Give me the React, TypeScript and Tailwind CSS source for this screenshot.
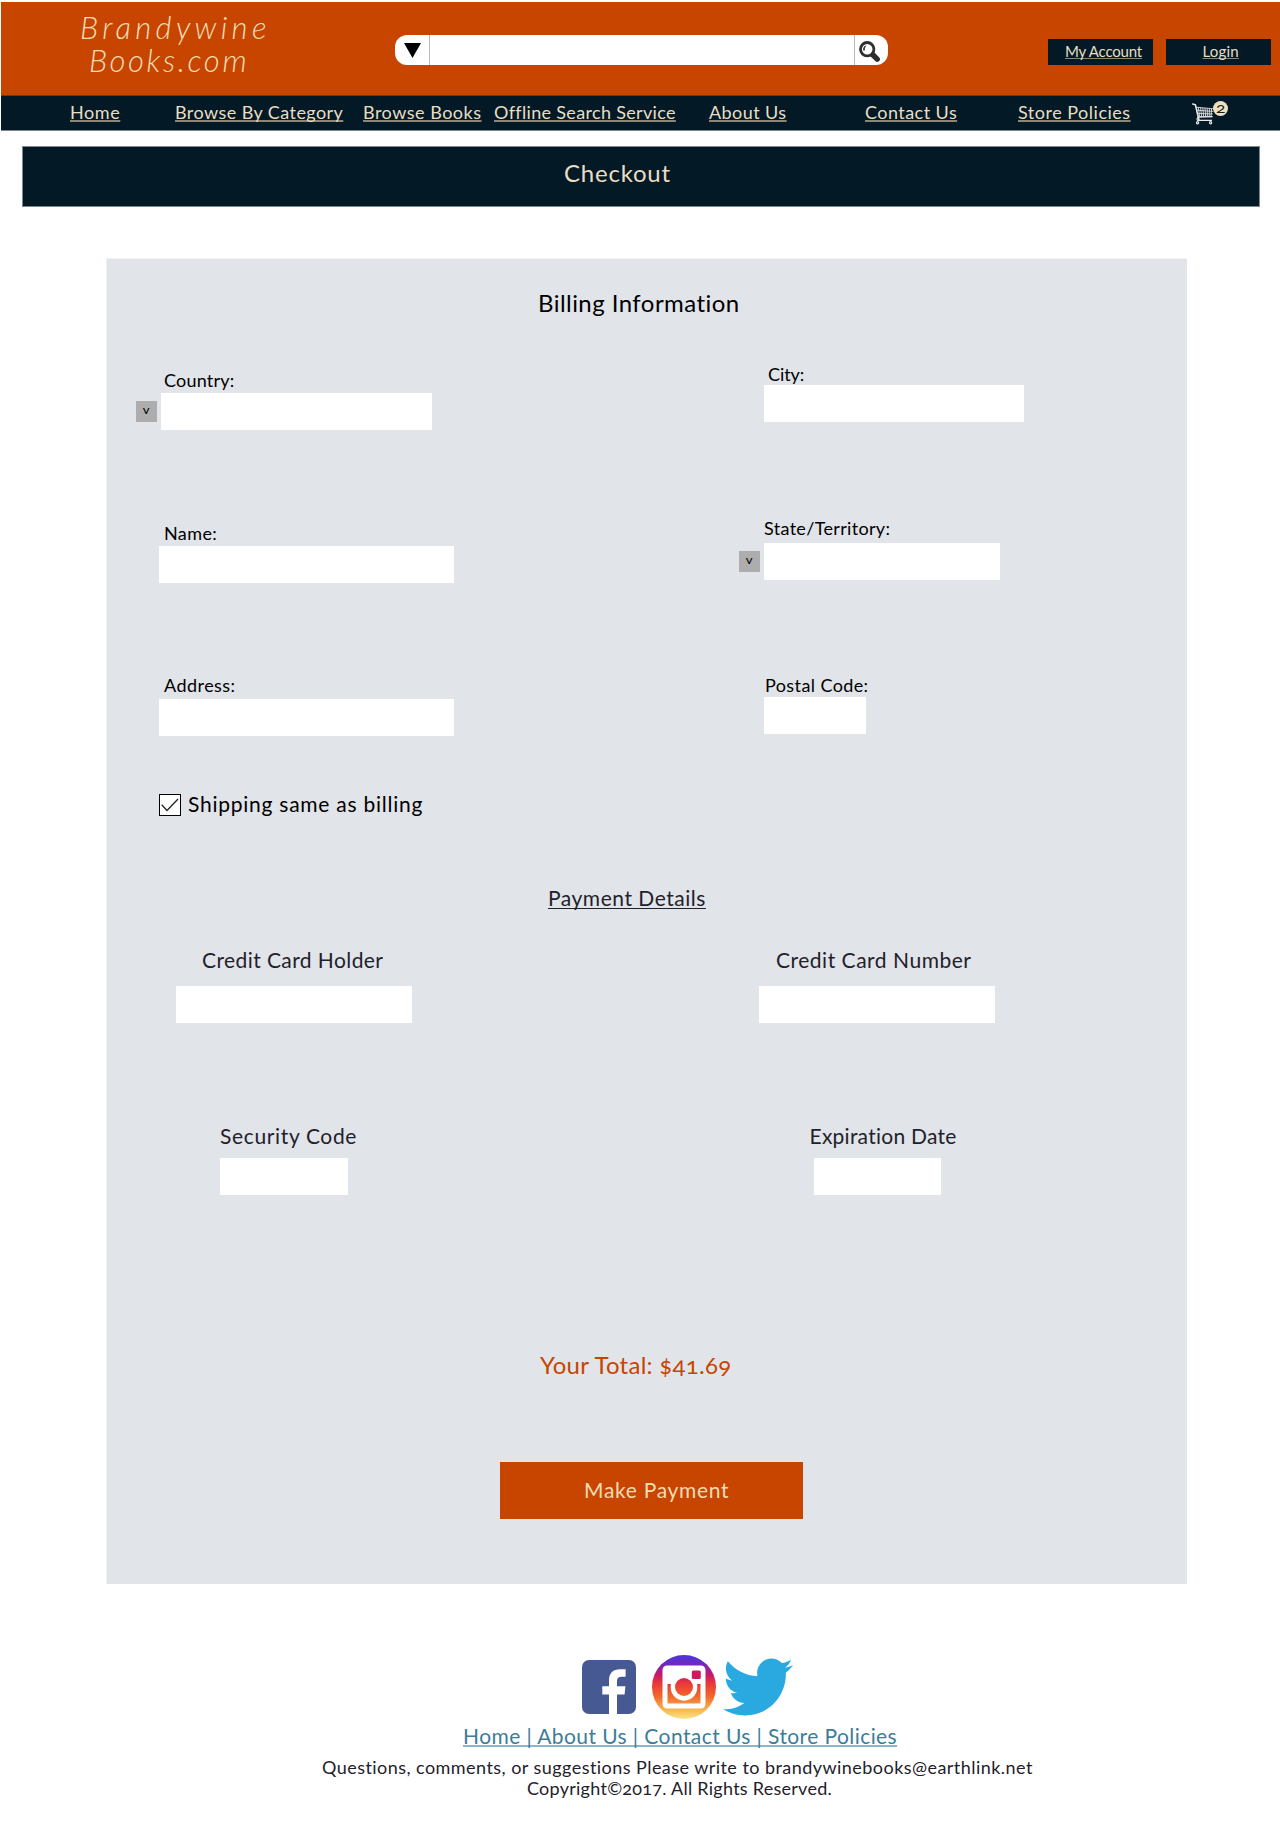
import type { ReactNode } from "react";
import { FaTwitter } from "react-icons/fa";

const navLink =
  "block whitespace-nowrap text-[18px] leading-5 text-[#e9dec2] underline decoration-[#8b8778] decoration-2 underline-offset-[1px] [text-decoration-skip-ink:none]";

function NavLink({ className, children }: { className: string; children: ReactNode }) {
  return (
    <a href="#" className={`${navLink} ${className}`}>
      {children}
    </a>
  );
}

function SearchIcon() {
  return (
    <svg width="22" height="22" viewBox="0 0 22 22" fill="none">
      <path d="M13.500 13.500 L18.200 18.200" stroke="#2e2e2e" strokeWidth="5.400" strokeLinecap="round" />
      <circle cx="8.200" cy="8.200" r="6.700" fill="#fff" stroke="#2e2e2e" strokeWidth="2.800" />
      <path d="M4.200 9.600 Q3.600 5.400 7.400 4.600 Q5.600 6.600 5.800 9.400 Z" fill="#2e2e2e" />
    </svg>
  );
}

function CartIcon() {
  return (
    <svg width="24" height="24" viewBox="0 0 24 24" fill="none" stroke="#e8e8ea">
      <path d="M0.8 2 L3.4 2.8 L7 18.2" strokeWidth="1.6" strokeLinecap="round" />
      <path d="M4 5.2 L22 6.8 M4.8 8.2 L21.4 9.4 M5.4 11.4 L20.8 12 M6 14.4 L20.2 14.6" strokeWidth="0.8" />
      <path
        d="M6.4 5.4 L7.6 14.5 M8.6 5.6 L9.6 14.5 M10.8 5.8 L11.6 14.5 M13 6 L13.6 14.5 M15.2 6.2 L15.4 14.5 M17.4 6.4 L17.2 14.5 M19.6 6.6 L19 14.5"
        strokeWidth="0.9"
      />
      <path d="M20.6 14.6 L6.4 15.2 Q4 17 5.6 18.4 L20 18.4" strokeWidth="1.1" />
      <circle cx="5.6" cy="20.8" r="1.1" strokeWidth="1.2" />
      <circle cx="18.6" cy="20.8" r="1.1" strokeWidth="1.2" />
    </svg>
  );
}

function FacebookIcon() {
  return (
    <svg width="54" height="54" viewBox="0 0 54 54">
      <rect width="54" height="54" rx="7" fill="#475993" />
      <path
        d="M27 54 V34.5 H20.3 V26.3 H27 V20.5 C27 13 31.2 9.2 38 9.2 H43.6 V16.8 H39.6 C36.4 16.8 35 18.2 35 21.2 V26.3 H43.4 L42.6 34.5 H35 V54 Z"
        fill="#fff"
      />
    </svg>
  );
}

function InstagramIcon() {
  return (
    <svg width="64" height="64" viewBox="0 0 64 64">
      <defs>
        <linearGradient id="ig" gradientUnits="userSpaceOnUse" x1="0" y1="0" x2="0" y2="64">
          <stop offset="0" stopColor="#4b35dc" />
          <stop offset="0.14" stopColor="#7029c0" />
          <stop offset="0.3" stopColor="#c4186f" />
          <stop offset="0.45" stopColor="#ea3a36" />
          <stop offset="0.65" stopColor="#f2682c" />
          <stop offset="0.85" stopColor="#f6b650" />
          <stop offset="1" stopColor="#fbe484" />
        </linearGradient>
      </defs>
      <circle cx="32" cy="32" r="32" fill="url(#ig)" />
      <path
        fill="#fff"
        fillRule="evenodd"
        d="M15 10.5 H49 A4.5 4.5 0 0 1 53.5 15 V49 A4.5 4.5 0 0 1 49 53.5 H15 A4.5 4.5 0 0 1 10.5 49 V15 A4.5 4.5 0 0 1 15 10.5 Z M15.5 29 V48.5 H48.5 V29 H45 A13.4 13.4 0 1 1 19 29 Z"
      />
      <circle cx="32" cy="32" r="9" fill="url(#ig)" />
      <rect x="39.8" y="15.5" width="9" height="8.5" rx="1.5" fill="#cf1a60" />
    </svg>
  );
}

function SelectButton() {
  return (
    <button className="flex h-[21px] w-[21px] shrink-0 items-center justify-center bg-[#adadad] text-black">
      <span className="block scale-x-110 pb-[3px] text-[12px] leading-none">v</span>
    </button>
  );
}

type FieldProps = {
  label: string;
  className: string;
  labelClass: string;
  inputClass: string;
  select?: boolean;
};

function Field({ label, className, labelClass, inputClass, select }: FieldProps) {
  return (
    <label className={`block ${className}`}>
      <span className={`block whitespace-nowrap ${labelClass}`}>{label}</span>
      <span className="flex items-center">
        {select && <SelectButton />}
        <input className={`block h-[37px] bg-white outline-none ${inputClass}`} />
      </span>
    </label>
  );
}

export default function App() {
  return (
    <div className="w-[1280px] bg-white pb-[38px] pl-px pt-[2px] font-['Lato',sans-serif] text-black [font-feature-settings:'onum']">
      <header className="flex h-[93px] bg-[#c84500]">
        <div className="ml-[79px] h-[80px] w-[210px] pt-[9px] text-[31px] font-light italic leading-[33px] text-[#f0deb4]">
          <div className="whitespace-nowrap tracking-[4.3px]">Brandywine</div>
          <div className="whitespace-nowrap pl-[9px] tracking-[2.6px]">Books.com</div>
        </div>
        <div className="ml-[105px] mt-[33px] flex h-[30px] w-[493px] overflow-hidden rounded-[12px] bg-white">
          <button className="flex w-[35px] justify-center border-r border-[#b8b8b8] pl-px pt-2">
            <svg width="17" height="15" viewBox="0 0 17 15">
              <path d="M0 0 H17 L8.5 15 Z" fill="#000" />
            </svg>
          </button>
          <input className="w-[424px] bg-white outline-none" />
          <button className="flex-1 border-l border-[#b8b8b8] pl-1 pt-[3px]">
            <SearchIcon />
          </button>
        </div>
        <div className="ml-[160px] mt-[37px] flex gap-[13px] text-[15px] leading-5 text-[#e9dec2]">
          <a
            href="#"
            className="h-[26px] w-[105px] bg-[#031926] pl-[17px] pt-[2px] tracking-[-0.2px] underline decoration-[#8b8778] underline-offset-1 [text-decoration-skip-ink:none]"
          >
            My Account
          </a>
          <a
            href="#"
            className="h-[26px] w-[105px] bg-[#031926] pl-[36.5px] pt-[2px] tracking-[0.2px] underline decoration-[#8b8778] underline-offset-1 [text-decoration-skip-ink:none]"
          >
            Login
          </a>
        </div>
      </header>

      <nav className="flex h-9 border-b border-t border-b-[#7c868c] border-t-[#43474a] bg-[#031926] pt-[6px]">
        <NavLink className="ml-[69px] w-[105px] tracking-[0.58px]">Home</NavLink>
        <NavLink className="w-[188px] tracking-[0.43px]">Browse By Category</NavLink>
        <NavLink className="w-[131px] tracking-[0.5px]">Browse Books</NavLink>
        <NavLink className="w-[215px] tracking-[0.33px]">Offline Search Service</NavLink>
        <NavLink className="w-[156px] tracking-[0.43px]">About Us</NavLink>
        <NavLink className="w-[153px] tracking-[0.45px]">Contact Us</NavLink>
        <NavLink className="w-[174px] tracking-[0.5px]">Store Policies</NavLink>
        <a href="#" className="relative block h-6 w-9">
          <CartIcon />
          <span className="absolute left-[21px] top-[-1px] flex h-[15px] w-[15px] items-center justify-center rounded-full bg-[#efe0bd] pb-[2px] text-[14px] leading-none text-[#10202a]">
            <span className="block scale-x-125">2</span>
          </span>
        </a>
      </nav>

      <h1 className="ml-[21px] mt-[15px] h-[61px] w-[1238px] border border-[#7c868c] bg-[#031926] pl-[541px] pt-[12px] text-[24px] leading-7 tracking-[0.78px] text-[#e9dec2]">
        Checkout
      </h1>

      <main className="ml-[105px] mt-[51px] h-[1326px] w-[1081px] bg-[#e1e4e9] pt-[31px] shadow-[inset_1px_1px_0_#f0f1f4]">
        <h2 className="pl-[432px] text-[24px] leading-7 tracking-[0.45px]">Billing Information</h2>

        <div className="mt-[47px] flex h-[66px] text-[18px] leading-5">
          <div className="w-[633px]">
            <Field
              label="Country:"
              select
              className="ml-[30px] pt-[6px]"
              labelClass="mb-[3px] pl-[28px] tracking-[0.2px]"
              inputClass="ml-1 w-[271px]"
            />
          </div>
          <Field
            label="City:"
            className="pl-[24.5px]"
            labelClass="mb-px pl-[4.5px] tracking-[-0.1px]"
            inputClass="w-[260.5px]"
          />
        </div>

        <div className="mt-[88px] flex h-[65px] text-[18px] leading-5">
          <div className="w-[633px]">
            <Field
              label="Name:"
              className="ml-[53px] pt-[5px]"
              labelClass="mb-[2.5px] pl-[5px] tracking-[0.4px]"
              inputClass="w-[295px]"
            />
          </div>
          <Field
            label="State/Territory:"
            select
            className=""
            labelClass="mb-[5px] pl-[25px] tracking-[0.33px]"
            inputClass="ml-1 w-[236px]"
          />
        </div>

        <div className="mt-[92px] flex h-[61px] text-[18px] leading-5">
          <div className="w-[633px]">
            <Field
              label="Address:"
              className="ml-[53px]"
              labelClass="mb-[4px] pl-[5px] tracking-[0.45px]"
              inputClass="w-[295px]"
            />
          </div>
          <Field
            label="Postal Code:"
            className="pl-[24.5px]"
            labelClass="mb-[2px] pl-[1.5px] tracking-[0.4px]"
            inputClass="w-[102.5px]"
          />
        </div>

        <div className="ml-[53px] mt-[56px] flex h-6 text-[21px] leading-6">
          <span className="mt-[2px] flex h-[22px] w-[22px] items-center justify-center border border-black bg-white">
            <svg width="18" height="14" viewBox="0 0 18 14" fill="none">
              <path d="M0.7 6.8 L6 12.5 L17 1" stroke="#222" strokeWidth="1.3" />
            </svg>
          </span>
          <span className="ml-[7px] tracking-[0.75px]">Shipping same as billing</span>
        </div>

        <section className="text-[21px] leading-6 text-[#1f212b]">
          <h2 className="ml-[442px] mt-[70px] w-fit tracking-[0.53px] underline decoration-1 underline-offset-[2px] [text-decoration-skip-ink:none]">
            Payment Details
          </h2>

          <div className="mt-[38px] flex h-[75px]">
            <div className="w-[583px] pl-[70px]">
              <Field
                label="Credit Card Holder"
                className=""
                labelClass="mb-[14px] pl-[26px] tracking-[0.42px]"
                inputClass="w-[236px]"
              />
            </div>
            <Field
              label="Credit Card Number"
              className="pl-[69.5px]"
              labelClass="mb-[14px] pl-[17.5px] tracking-[0.52px]"
              inputClass="w-[236px]"
            />
          </div>

          <div className="mt-[101px] flex h-[71px]">
            <div className="w-[633px] pl-[114px]">
              <Field
                label="Security Code"
                className=""
                labelClass="mb-[10px] tracking-[0.65px]"
                inputClass="w-[127.5px]"
              />
            </div>
            <Field
              label="Expiration Date"
              className="pl-[74.5px]"
              labelClass="mb-[10px] -ml-[4px] tracking-[0.25px]"
              inputClass="w-[127.5px]"
            />
          </div>
        </section>

        <p className="ml-[434px] mt-[156px] text-[24px] leading-7 tracking-[0.28px] text-[#c84500]">
          Your Total: $41.69
        </p>
        <button className="ml-[394px] mt-[83px] flex h-[57px] w-[303px] bg-[#c84500] pl-[84px] pt-[16px] text-[21px] leading-6 tracking-[0.7px] text-[#f2dcb4]">
          Make Payment
        </button>
      </main>

      <footer>
        <div className="ml-[581px] mt-[71px] flex h-[64px] items-start">
          <div className="mt-[5px]">
            <FacebookIcon />
          </div>
          <div className="ml-[16px]">
            <InstagramIcon />
          </div>
          <FaTwitter className="ml-[7px] mt-[-3px] h-[70px] w-[70px] text-[#2aa9e0]" />
        </div>
        <a
          href="#"
          className="ml-[462px] mt-[5px] block w-fit text-[21px] leading-6 tracking-[0.42px] text-[#3d7d98] underline decoration-[#8fb5c6] decoration-2 underline-offset-[1px] [text-decoration-skip-ink:none]"
        >
          Home | About Us | Contact Us | Store Policies
        </a>
        <p className="ml-[321px] mt-[9px] whitespace-nowrap text-[18px] leading-[21px] tracking-[0.45px] text-[#1f212b]">
          Questions, comments, or suggestions Please write to brandywinebooks@earthlink.net
        </p>
        <p className="ml-[526px] whitespace-nowrap text-[18px] leading-[21px] tracking-[0.26px] text-[#1f212b]">
          Copyright©2017. All Rights Reserved.
        </p>
      </footer>
    </div>
  );
}
